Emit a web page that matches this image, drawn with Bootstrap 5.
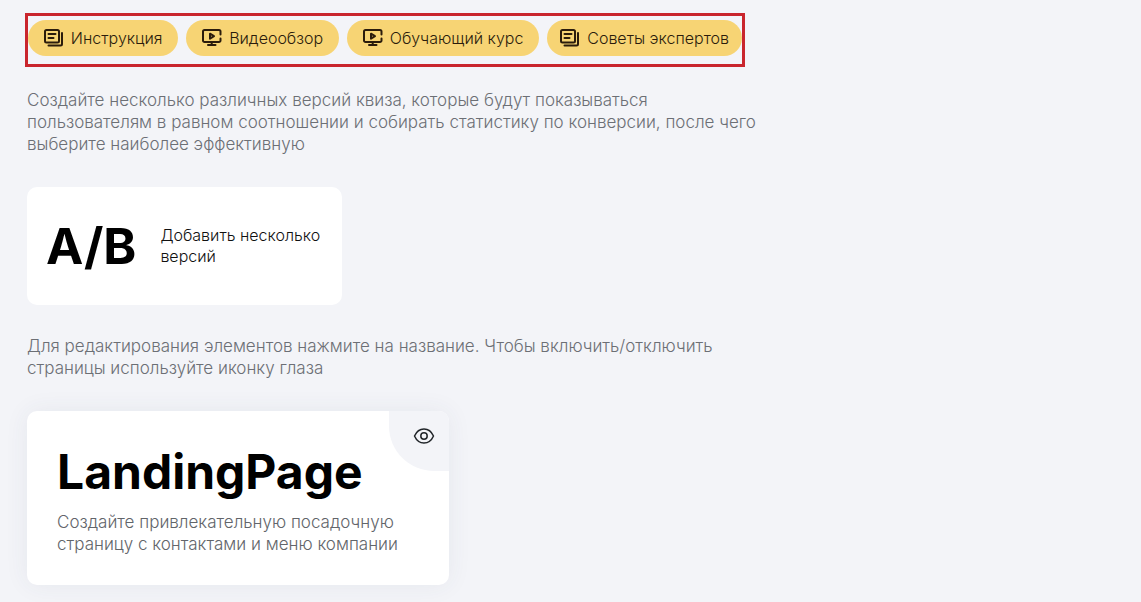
<!DOCTYPE html>
<html lang="ru">
<head>
<meta charset="utf-8">
<meta name="viewport" content="width=device-width, initial-scale=1">
<title>Версии квиза</title>
<link href="https://cdn.jsdelivr.net/npm/bootstrap@5.3.0/dist/css/bootstrap.min.css" rel="stylesheet">
<style>
body { background: #f3f4f8; font-family: Inter, "Open Sans", sans-serif; font-weight: 300; font-size: 17px; line-height: 22px; color: #111; }
.page { padding: 13px 25px 17px; }
.help-bar { border: 3px solid #c9252d; padding: 4px 0 8px; max-width: 720px; margin-bottom: 22px; }
.btn-help { --bs-btn-bg: #f7d474; --bs-btn-hover-bg: #f3ca5c; --bs-btn-active-bg: #f0c24a; --bs-btn-color: #2b1c0c; --bs-btn-border-width: 0; --bs-btn-font-weight: 300; --bs-btn-font-size: 16px; --bs-btn-line-height: 20px; --bs-btn-padding-x: 13px; --bs-btn-padding-y: 8px; gap: 7px; }
.hint { color: #6c6f75; max-width: 745px; padding-left: 2px; margin-bottom: 32px; }
.tile { background: #fff; border-radius: 10px; margin-left: 2px; }
.tile-ab { width: 315px; min-height: 118px; padding: 16px 19px; color: #111; font-weight: 300; margin-bottom: 30px; gap: 24px; }
.big { font-weight: 700; font-size: 48px; line-height: 56px; color: #000; }
.mark-ab { font-size: 50px; }
.title { margin-bottom: 11px; }
.ab-text { font-size: 16px; line-height: 21px; }
.tile-page { max-width: 422px; padding: 33px 30px 30px; box-shadow: 0 0 24px rgba(60, 65, 100, .07); }
.eye { width: 60px; height: 60px; padding: 0 0 10px 10px; background: #f3f4f8; border-radius: 0 10px 0 45px; }
.desc { color: #62656a; }
svg { fill: none; stroke: currentColor; stroke-linecap: round; stroke-linejoin: round; flex: none; }
</style>
</head>
<body>
<svg class="d-none" aria-hidden="true">
  <symbol id="doc" viewBox="0 0 20 20"><rect x="1" y="2" width="14" height="12.500" rx="1.500"/><path d="M4.500 6h7M4.500 10h5M18 5v11a1.500 1.500 0 0 1-1.500 1.500H4.500"/></symbol>
  <symbol id="video" viewBox="0 0 20 20"><path d="M18.500 10.500v2a1.500 1.500 0 0 1-1.500 1.500H2.500A1.500 1.500 0 0 1 1 12.500v-9A1.500 1.500 0 0 1 2.500 2H17A1.500 1.500 0 0 1 18.500 3.500v3M9.700 14v3M6 17h7.500M8 5.700v5L12 8.200z"/></symbol>
</svg>
<main class="page">
  <nav class="help-bar d-flex gap-2" aria-label="Справка">
    <button type="button" class="btn btn-help rounded-pill d-flex align-items-center justify-content-center flex-grow-1 text-nowrap"><svg width="20" height="20" stroke-width="2"><use href="#doc"/></svg>Инструкция</button>
    <button type="button" class="btn btn-help rounded-pill d-flex align-items-center justify-content-center flex-grow-1 text-nowrap"><svg width="20" height="20" stroke-width="2"><use href="#video"/></svg>Видеообзор</button>
    <button type="button" class="btn btn-help rounded-pill d-flex align-items-center justify-content-center flex-grow-1 text-nowrap"><svg width="20" height="20" stroke-width="2"><use href="#video"/></svg>Обучающий курс</button>
    <button type="button" class="btn btn-help rounded-pill d-flex align-items-center justify-content-center text-nowrap"><svg width="20" height="20" stroke-width="2"><use href="#doc"/></svg>Советы экспертов</button>
  </nav>
  <p class="hint">Создайте несколько различных версий квиза, которые будут показываться пользователям в равном соотношении и собирать статистику по конверсии, после чего выберите наиболее эффективную</p>
  <button type="button" class="tile tile-ab border-0 d-flex align-items-center text-start"><span class="big mark-ab">A/B</span><span class="ab-text">Добавить несколько версий</span></button>
  <p class="hint">Для редактирования элементов нажмите на название. Чтобы включить/отключить страницы используйте иконку глаза</p>
  <section class="tile tile-page position-relative">
    <button type="button" class="eye btn border-0 position-absolute top-0 end-0 d-flex align-items-center justify-content-center" aria-label="Включить или отключить страницу"><svg width="22" height="22" viewBox="0 0 22 22" stroke-width="1.500"><path d="M1.500 11C3.500 6.500 7 4 11 4s7.500 2.500 9.500 7c-2 4.500-5.500 7-9.500 7S3.500 15.500 1.500 11z"/><circle cx="11" cy="11" r="3.200"/></svg></button>
    <h2 class="big title">LandingPage</h2>
    <p class="desc mb-0">Создайте привлекательную посадочную страницу с контактами и меню компании</p>
  </section>
</main>
<script src="https://cdn.jsdelivr.net/npm/bootstrap@5.3.0/dist/js/bootstrap.bundle.min.js"></script>
</body>
</html>
